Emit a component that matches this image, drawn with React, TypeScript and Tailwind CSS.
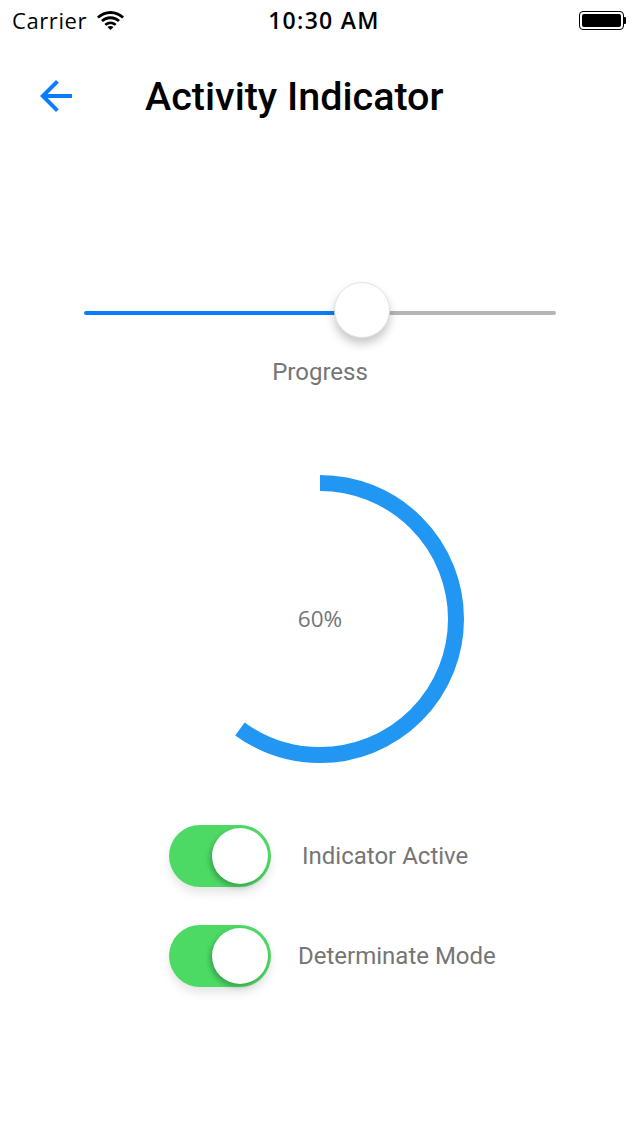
import React from 'react';

const font = { sans: 'font-["Roboto","Noto_Sans",sans-serif]' };

const StatusBar = () => (
  <div className='h-[40px] flex items-center justify-between px-[12px] font-["Open_Sans","Liberation_Sans",sans-serif] text-black'>
    <div className="flex items-center gap-[10px] w-[140px]">
      <span className="text-[22px] leading-none tracking-[0.6px]">Carrier</span>
      <svg width="27" height="19" viewBox="0 0 27 19">
        <path d="M13.5 3C9 3 5 4.8 1.8 7.6L0 5.6C3.7 2.2 8.4 0 13.5 0S23.3 2.2 27 5.6l-1.8 2C22 4.8 18 3 13.5 3z" fill="#000" />
        <path d="M13.5 8.2c-3 0-5.6 1.1-7.6 2.9L4 9.1C6.5 6.8 9.8 5.3 13.5 5.3S20.5 6.8 23 9.1l-1.9 2c-2-1.8-4.6-2.9-7.6-2.9z" fill="#000" />
        <path d="M13.5 13.2c-1.7 0-3.2.6-4.3 1.6L7.4 12.9c1.6-1.5 3.7-2.4 6.1-2.4s4.5.9 6.1 2.4l-1.8 1.9c-1.1-1-2.6-1.6-4.3-1.6z" fill="#000" />
        <path d="M13.5 19l-3-3c.8-.7 1.8-1.1 3-1.1s2.2.4 3 1.1z" fill="#000" />
      </svg>
    </div>
    <span className="text-[23px] leading-none font-semibold tracking-[1.3px] pl-[8px]">10:30 AM</span>
    <div className="w-[140px] flex justify-end items-center pr-[2px]">
      <div className="w-[45px] h-[19px] rounded-[4px] border border-black p-[2px]">
        <div className="w-full h-full bg-black rounded-[2px]" />
      </div>
      <div className="w-[2px] h-[7px] bg-black rounded-r-[1px]" />
    </div>
  </div>
);

const Header = () => (
  <div className="h-[112px] flex items-center">
    <div className="w-[145px] flex justify-start pl-[32px]">
      <svg width="48" height="48" viewBox="0 0 24 24">
        <path d="M20 11H7.83l5.59-5.59L12 4l-8 8 8 8 1.41-1.41L7.83 13H20v-2z" fill="#0a7cff" />
      </svg>
    </div>
    <h1 className={`${font.sans} text-[39.5px] font-medium text-black leading-none pt-[2px]`}>
      Activity Indicator
    </h1>
  </div>
);

const Slider = ({ value }: { value: number }) => {
  const width = 472;
  const thumb = 56;
  const left = value * (width - thumb);
  return (
    <div className="flex flex-col items-center mt-[130px]">
      <div className="relative w-[472px] h-[56px] flex items-center pt-[5px]">
        <div className="h-[4px] bg-[#0a7cff] rounded-l-full" style={{ width: left + thumb / 2 }} />
        <div className="h-[4px] flex-1 bg-[#b5b5b5] rounded-r-full" />
        <div
          className="absolute top-0 w-[56px] h-[56px] rounded-full bg-white border border-[#e2e2e2] shadow-[0_6px_10px_rgba(0,0,0,0.22)]"
          style={{ left }}
        />
      </div>
      <span className={`${font.sans} mt-[20px] text-[24px] leading-[28px] text-[#757575]`}>Progress</span>
    </div>
  );
};

const CircularProgress = ({ percent }: { percent: number }) => {
  const r = 136;
  const c = 2 * Math.PI * r;
  return (
    <div className="relative mx-auto mt-[89px] w-[288px] h-[288px] flex items-center justify-center">
      <svg width="288" height="288" viewBox="0 0 288 288" className="absolute inset-0 -rotate-90">
        <circle
          cx="144"
          cy="144"
          r={r}
          fill="none"
          stroke="#2196f3"
          strokeWidth="16"
          strokeDasharray={`${(c * percent) / 100} ${c}`}
        />
      </svg>
      <span className='font-["Open_Sans","Noto_Sans",sans-serif] text-[22.5px] text-[#757575] leading-none'>
        {percent}%
      </span>
    </div>
  );
};

const Switch = () => (
  <div className="relative w-[102px] h-[62px] rounded-full bg-[#4cd964] shadow-[0_6px_10px_rgba(0,0,0,0.10)]">
    <div className="absolute right-[3px] top-[3px] w-[56px] h-[56px] rounded-full bg-white shadow-[-2px_3px_5px_rgba(0,0,0,0.25)]" />
  </div>
);

const ToggleRow = ({ label, gap }: { label: string; gap: string }) => (
  <div className="flex items-center">
    <Switch />
    <span className={`${font.sans} ${gap} text-[24px] text-[#757575] leading-none`}>{label}</span>
  </div>
);

export default function App() {
  return (
    <div className="w-[640px] h-[1136px] bg-white overflow-hidden">
      <StatusBar />
      <Header />
      <Slider value={0.6} />
      <CircularProgress percent={60} />
      <div className="flex flex-col gap-[38px] mt-[62px] pl-[169px]">
        <ToggleRow label="Indicator Active" gap="ml-[31px]" />
        <ToggleRow label="Determinate Mode" gap="ml-[27px]" />
      </div>
    </div>
  );
}
